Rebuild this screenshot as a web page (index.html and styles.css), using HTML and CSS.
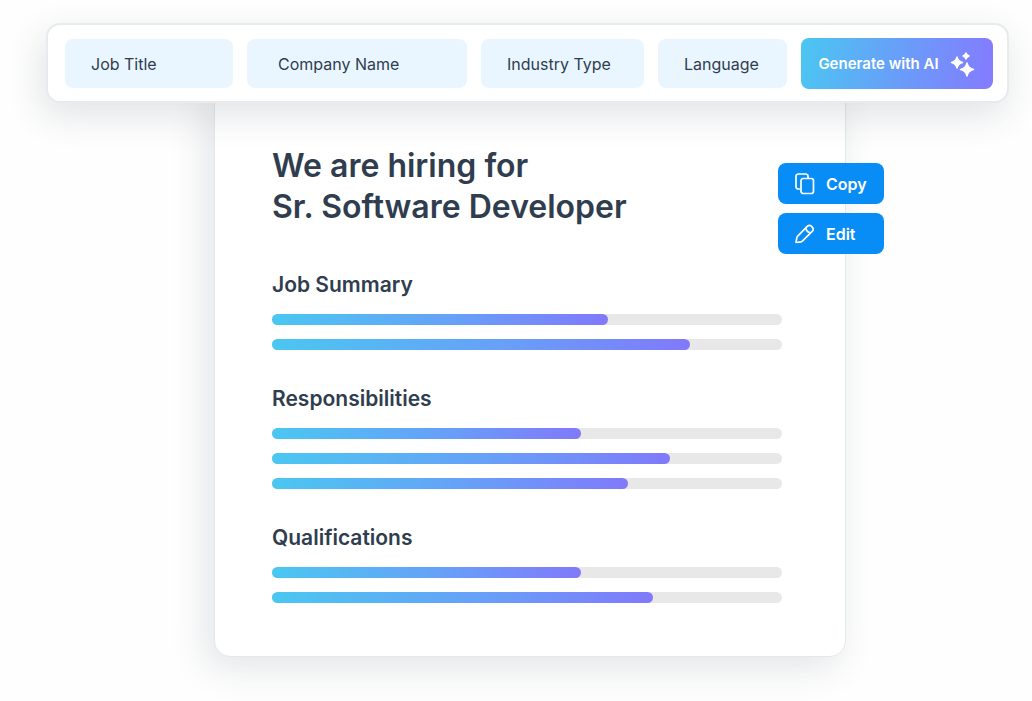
FILE: index.html
```
<!DOCTYPE html>
<html lang="en">
<head>
    <meta charset="UTF-8">
    <meta name="viewport" content="width=device-width, initial-scale=1.0">
    <title>AI Job Description Generator</title>
    <link rel="stylesheet" href="styles.css">
</head>
<body>
    <main class="page">
        <form class="toolbar">
            <input class="field" type="text" placeholder="Job Title" aria-label="Job Title">
            <input class="field field-wide" type="text" placeholder="Company Name" aria-label="Company Name">
            <input class="field" type="text" placeholder="Industry Type" aria-label="Industry Type">
            <input class="field" type="text" placeholder="Language" aria-label="Language">
            <button class="generate-btn" type="button">
                Generate with AI
                <svg width="26" height="26" viewBox="0 0 26 26" fill="#fff" stroke="#fff" stroke-width="1.4" stroke-linejoin="round" aria-hidden="true">
                    <path d="M7 6 Q8 10.500 12.500 11.500 Q8 12.500 7 17 Q6 12.500 1.500 11.500 Q6 10.500 7 6Z"/>
                    <path d="M16 2 Q16.700 4.300 19 5 Q16.700 5.700 16 8 Q15.300 5.700 13 5 Q15.300 4.300 16 2Z"/>
                    <path d="M17 12 Q18.200 17.300 23.500 18.500 Q18.200 19.700 17 25 Q15.800 19.700 10.500 18.500 Q15.800 17.300 17 12Z"/>
                </svg>
            </button>
        </form>

        <article class="card">
            <div class="actions">
                <button class="action-btn" type="button">
                    <svg width="22" height="24" viewBox="0 0 22 24" fill="none" stroke="#fff" stroke-width="1.700" aria-hidden="true">
                        <path d="M6.500 17H4.300A2.300 2.300 0 0 1 2 14.700V4.300A2.300 2.300 0 0 1 4.300 2H11.700A2.300 2.300 0 0 1 14 4.300V6"/>
                        <rect x="7" y="6.500" width="12.500" height="15" rx="2.300"/>
                    </svg>
                    Copy
                </button>
                <button class="action-btn" type="button">
                    <svg width="22" height="24" viewBox="0 0 22 24" fill="none" stroke="#fff" stroke-width="1.700" stroke-linejoin="round" aria-hidden="true">
                        <path d="M2 20.500L2.800 15.800Q3 14.800 3.700 14.100L13.500 4.200Q15.400 2.400 17.300 4.200L18.400 5.300Q20.200 7.200 18.400 9.100L8.600 18.900Q7.900 19.600 6.900 19.800Z"/>
                        <path d="M11.700 6Q12.500 10 16.600 10.900"/>
                    </svg>
                    Edit
                </button>
            </div>

            <h1>We are hiring for<br>Sr. Software Developer</h1>

            <section class="section">
                <h2>Job Summary</h2>
                <div class="bars">
                    <div class="bar"><div class="bar-fill" style="width: 65.8%"></div></div>
                    <div class="bar"><div class="bar-fill" style="width: 82%"></div></div>
                </div>
            </section>

            <section class="section">
                <h2>Responsibilities</h2>
                <div class="bars">
                    <div class="bar"><div class="bar-fill" style="width: 60.5%"></div></div>
                    <div class="bar"><div class="bar-fill" style="width: 78.1%"></div></div>
                    <div class="bar"><div class="bar-fill" style="width: 69.8%"></div></div>
                </div>
            </section>

            <section class="section">
                <h2>Qualifications</h2>
                <div class="bars">
                    <div class="bar"><div class="bar-fill" style="width: 60.5%"></div></div>
                    <div class="bar"><div class="bar-fill" style="width: 74.8%"></div></div>
                </div>
            </section>
        </article>
    </main>
</body>
</html>
```
FILE: styles.css
```
/* Global Styles */
* {
    box-sizing: border-box;
}

body {
    margin: 0;
    font-family: Inter, "Liberation Sans", sans-serif;
    background-color: #FEFEFE;
    color: #2F3D4F;
}

button,
input {
    font-family: inherit;
    border: none;
    cursor: pointer;
}

.page {
    padding: 23px 23px 44px 46px;
}

/* Toolbar */
.toolbar {
    position: relative;
    z-index: 1;
    display: grid;
    grid-template-columns: 168fr 220fr 163fr 129fr 192fr;
    align-items: center;
    gap: 14px;
    padding: 13px 14px 12px 17px;
    background: #FFFFFF;
    border: 2px solid #E8EBED;
    border-radius: 14px;
    box-shadow: -4px 12px 36px rgba(40, 55, 70, 0.14);
}

.field {
    min-width: 0;
    width: 100%;
    height: 49px;
    padding: 0 8px 0 26px;
    background: #EAF6FF;
    border-radius: 8px;
    color: #2F3D4F;
    font-size: 16px;
}

.field-wide {
    padding-left: 31px;
}

.field::placeholder {
    color: #2F3D4F;
    opacity: 1;
}

.generate-btn {
    display: flex;
    align-items: center;
    justify-content: center;
    gap: 11px;
    height: 51px;
    padding: 0;
    background: linear-gradient(100deg, #4AC7F1, #67A0F8 48%, #857AFF);
    border-radius: 8px;
    color: #FFFFFF;
    font-size: 15px;
    font-weight: 600;
    white-space: nowrap;
}

/* Card */
.card {
    position: relative;
    margin: -17px 163px 0 168px;
    padding: 58px 63px 53px 57px;
    background: #FFFFFF;
    border: 1px solid #E3E8EB;
    border-radius: 16px;
    box-shadow: -8px 10px 36px rgba(40, 55, 70, 0.13);
}

h1 {
    margin: 0 0 43px;
    font-size: 32px;
    font-weight: 600;
    line-height: 41px;
}

h2 {
    margin: 0 0 14px;
    font-size: 21px;
    font-weight: 600;
    line-height: 30px;
}

.section + .section {
    margin-top: 34px;
}

/* Progress bars */
.bars {
    display: grid;
    gap: 14px;
}

.bar {
    height: 11px;
    background: #E8E8E9;
    border-radius: 6px;
}

.bar-fill {
    height: 100%;
    background: linear-gradient(100deg, #4AC7F1, #67A0F8 55%, #8179FB);
    border-radius: 6px;
}

/* Copy / Edit buttons, hanging over the right edge of the card */
.actions {
    position: absolute;
    top: 76px;
    right: -39px;
    display: grid;
    gap: 9px;
}

.action-btn {
    display: flex;
    align-items: center;
    gap: 10px;
    width: 106px;
    height: 41px;
    padding: 0 16px;
    background: #078DF5;
    border-radius: 8px;
    color: #FFFFFF;
    font-size: 16px;
    font-weight: 600;
}
```
